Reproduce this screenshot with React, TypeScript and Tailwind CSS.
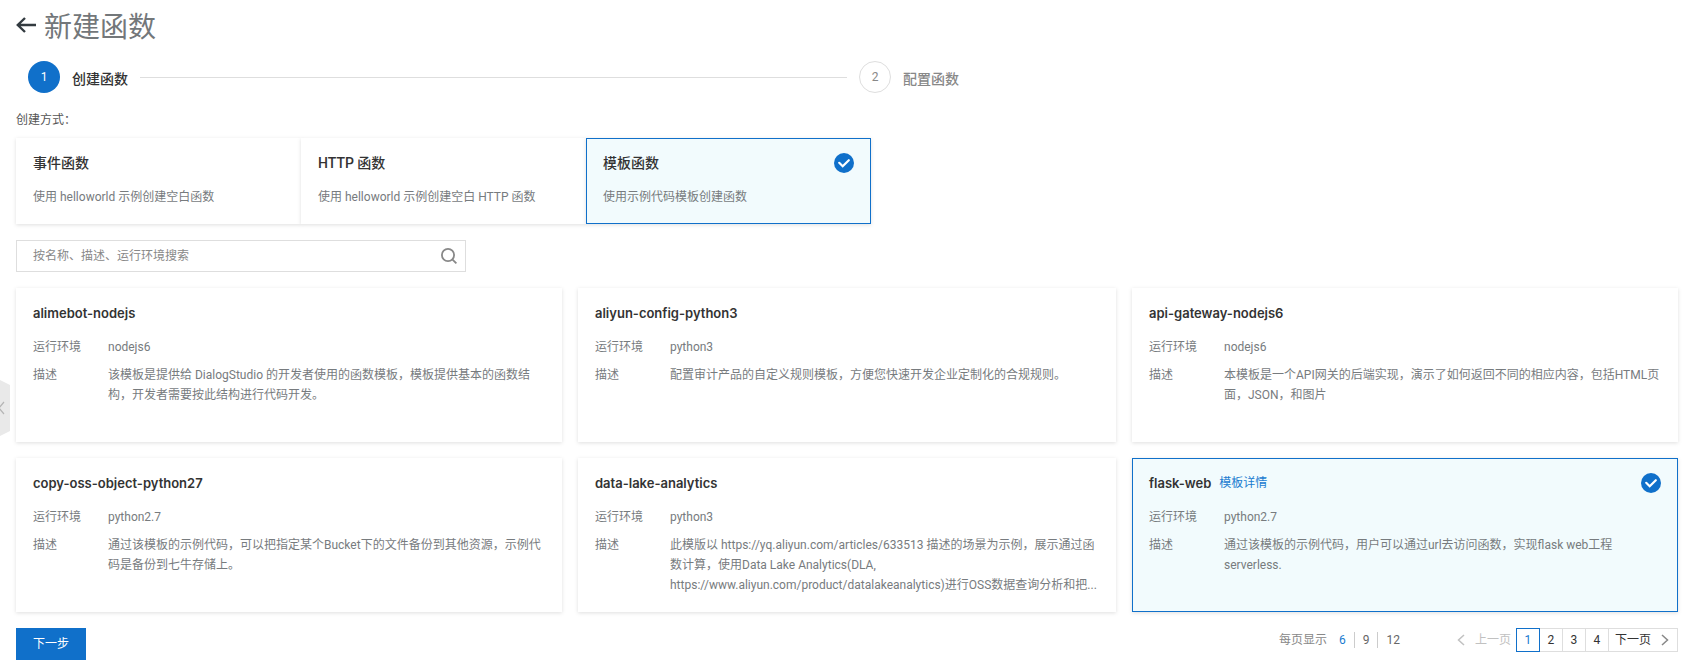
import { useState } from 'react';
import clsx from 'clsx';

interface CreateMethod {
  id: string;
  title: string;
  description: string;
}

interface Template {
  name: string;
  runtime: string;
  description: string;
}

const createMethods: CreateMethod[] = [
  { id: 'event', title: '事件函数', description: '使用 helloworld 示例创建空白函数' },
  { id: 'http', title: 'HTTP 函数', description: '使用 helloworld 示例创建空白 HTTP 函数' },
  { id: 'template', title: '模板函数', description: '使用示例代码模板创建函数' },
];

const templates: Template[] = [
  {
    name: 'alimebot-nodejs',
    runtime: 'nodejs6',
    description: '该模板是提供给 DialogStudio 的开发者使用的函数模板，模板提供基本的函数结构，开发者需要按此结构进行代码开发。',
  },
  {
    name: 'aliyun-config-python3',
    runtime: 'python3',
    description: '配置审计产品的自定义规则模板，方便您快速开发企业定制化的合规规则。',
  },
  {
    name: 'api-gateway-nodejs6',
    runtime: 'nodejs6',
    description: '本模板是一个API网关的后端实现，演示了如何返回不同的相应内容，包括HTML页面，JSON，和图片',
  },
  {
    name: 'copy-oss-object-python27',
    runtime: 'python2.7',
    description: '通过该模板的示例代码，可以把指定某个Bucket下的文件备份到其他资源，示例代码是备份到七牛存储上。',
  },
  {
    name: 'data-lake-analytics',
    runtime: 'python3',
    description:
      '此模版以 https://yq.aliyun.com/articles/633513 描述的场景为示例，展示通过函数计算，使用Data Lake Analytics(DLA, https://www.aliyun.com/product/datalakeanalytics)进行OSS数据查询分析和把...',
  },
  {
    name: 'flask-web',
    runtime: 'python2.7',
    description: '通过该模板的示例代码，用户可以通过url去访问函数，实现flask web工程serverless.',
  },
];

const pageSizes = [6, 9, 12];
const pages = [1, 2, 3, 4];

function CheckBadge() {
  return (
    <svg className="ml-auto size-5 shrink-0" viewBox="0 0 20 20" aria-hidden="true">
      <circle cx="10" cy="10" r="10" fill="#1070ca" />
      <path d="M5.2 9.8l3.5 3.5 6.1-6.1" fill="none" stroke="#fff" strokeWidth="2.2" strokeLinecap="round" />
    </svg>
  );
}

function Chevron({ direction }: { direction: 'left' | 'right' }) {
  return (
    <svg className="h-3 w-2 shrink-0" viewBox="0 0 8 12" fill="none" stroke="currentColor" strokeWidth="1.5" aria-hidden="true">
      <path d={direction === 'left' ? 'M7 1L1.5 6 7 11' : 'M1 1l5.5 5L1 11'} />
    </svg>
  );
}

function Steps() {
  return (
    <ol className="-mr-3 ml-3 flex h-8 items-center">
      <li className="flex w-1/2 items-center" aria-current="step">
        <span className="flex size-8 items-center justify-center rounded-full bg-[#1070ca] text-xs text-white">1</span>
        <span className="ml-3 pt-1 text-sm font-medium text-[#333]">创建函数</span>
        <span className="mx-3 h-px flex-1 bg-[#dedede]" />
      </li>
      <li className="flex items-center">
        <span className="flex size-8 items-center justify-center rounded-full border border-[#dedede] text-xs text-[#888]">2</span>
        <span className="ml-3 pt-1 text-sm font-medium text-[#888]">配置函数</span>
      </li>
    </ol>
  );
}

interface MethodCardProps {
  method: CreateMethod;
  selected: boolean;
  onSelect: () => void;
}

function MethodCard({ method, selected, onSelect }: MethodCardProps) {
  return (
    <label
      className={clsx(
        'relative block flex-1 cursor-pointer border px-4 pt-3.5 pb-4 shadow-[0_1px_4px_rgba(0,0,0,0.13)]',
        selected ? 'border-[#1070ca] bg-[#f2fbfd]' : 'border-transparent bg-white',
      )}
    >
      <input type="radio" name="method" className="sr-only" checked={selected} onChange={onSelect} />
      <span className="flex h-5 items-center text-sm font-medium text-[#333]">
        {method.title}
        {selected && <CheckBadge />}
      </span>
      <span className="mt-3.5 block text-xs leading-5 text-[#777b7e]">{method.description}</span>
    </label>
  );
}

interface TemplateCardProps {
  template: Template;
  selected: boolean;
  onSelect: () => void;
}

function TemplateCard({ template, selected, onSelect }: TemplateCardProps) {
  return (
    <label
      className={clsx(
        'relative block min-h-[154px] w-full cursor-pointer border px-4 pt-3.5 pb-4 text-xs leading-5 text-[#777b7e] shadow-[0_1px_4px_rgba(0,0,0,0.13)]',
        selected ? 'border-[#1070ca] bg-[#f2fbfd]' : 'border-transparent bg-white',
      )}
    >
      <input type="radio" name="template" className="sr-only" checked={selected} onChange={onSelect} />
      <span className="flex h-5 items-center">
        <span className="font-[Inter,'Noto_Sans_CJK_SC',sans-serif] text-[13px] font-semibold text-[#333]">{template.name}</span>
        {selected && (
          <>
            <a href="#detail" className="ml-2 text-[#1a7bd0]">
              模板详情
            </a>
            <CheckBadge />
          </>
        )}
      </span>
      <span className="mt-3.5 flex">
        <span className="w-[75px] shrink-0">运行环境</span>
        <span>{template.runtime}</span>
      </span>
      <span className="mt-2 flex">
        <span className="w-[75px] shrink-0">描述</span>
        <span className="min-w-0 flex-1">{template.description}</span>
      </span>
    </label>
  );
}

export default function App() {
  const [method, setMethod] = useState('template');
  const [template, setTemplate] = useState('flask-web');
  const [pageSize, setPageSize] = useState(6);
  const [page, setPage] = useState(1);

  return (
    <main className="relative overflow-x-hidden bg-white pt-[9px] pr-3.5 pb-3 pl-4 font-[Roboto,'Noto_Sans_CJK_SC',sans-serif] text-[#333]">
      {/* Sidebar collapse handle */}
      <button type="button" aria-label="收起" className="absolute top-[380px] left-0 text-[#b5b5b5]">
        <svg className="h-14 w-2.5" viewBox="0 0 10 56" fill="none" aria-hidden="true">
          <path d="M0 0l10 5v46L0 56z" fill="#e9e9e9" />
          <path d="M4 22l-5 6 5 6" stroke="currentColor" strokeWidth="1.2" />
        </svg>
      </button>

      {/* Header */}
      <header className="mb-4 flex h-9 items-center">
        <a href="#back" aria-label="返回" className="mr-2 mb-1 text-[#333b40]">
          <svg className="h-4 w-5" viewBox="0 0 20 16" fill="none" stroke="currentColor" strokeWidth="2.4" aria-hidden="true">
            <path d="M20 8H1.8M9 1L1.8 8 9 15" />
          </svg>
        </a>
        <h1 className="pt-0.5 text-[28px] leading-9 text-[#73777a]">新建函数</h1>
      </header>

      <Steps />

      {/* Creation method */}
      <fieldset className="mt-[17px]">
        <legend className="text-xs leading-5 text-[#555]">创建方式：</legend>
        <div className="mt-2 flex max-w-[855px]">
          {createMethods.map((item) => (
            <MethodCard key={item.id} method={item} selected={method === item.id} onSelect={() => setMethod(item.id)} />
          ))}
        </div>
      </fieldset>

      {/* Search */}
      <div className="mt-4 flex h-8 max-w-[450px] items-center border border-[#dedede] pr-2">
        <input
          type="text"
          aria-label="搜索模板"
          placeholder="按名称、描述、运行环境搜索"
          className="h-full min-w-0 flex-1 px-4 text-xs outline-none placeholder:text-[#888]"
        />
        <button type="button" aria-label="搜索" className="text-[#888]">
          <svg className="size-4" viewBox="0 0 16 16" fill="none" stroke="currentColor" strokeWidth="1.8" aria-hidden="true">
            <circle cx="7" cy="7" r="6.1" />
            <path d="M11.3 11.3l4.1 4.1" />
          </svg>
        </button>
      </div>

      {/* Templates */}
      <div className="mt-4 grid grid-cols-3 gap-y-4">
        {templates.map((item, index) => (
          <div key={item.name} className={clsx('flex', index % 3 !== 0 && 'pl-2', index % 3 !== 2 && 'pr-2')}>
            <TemplateCard template={item} selected={template === item.name} onSelect={() => setTemplate(item.name)} />
          </div>
        ))}
      </div>

      {/* Footer */}
      <footer className="mt-4 flex items-start justify-between text-xs">
        <button type="button" className="h-8 bg-[#1070ca] px-[17px] text-white">
          下一步
        </button>
        <div className="flex h-6 items-center">
          <span className="mr-3 text-[#888]">每页显示</span>
          <div className="flex items-center divide-x divide-[#ccc]">
            {pageSizes.map((size) => (
              <button
                key={size}
                type="button"
                onClick={() => setPageSize(size)}
                className={clsx('px-2 leading-4 first:pl-0 last:pr-0', pageSize === size ? 'text-[#1a7bd0]' : 'text-[#666]')}
              >
                {size}
              </button>
            ))}
          </div>
          <nav aria-label="分页" className="ml-[57px] flex h-6">
            <button type="button" disabled className="flex items-center gap-2.5 pr-[5px] text-[#c1c1c1]">
              <Chevron direction="left" />
              上一页
            </button>
            {pages.map((num) => (
              <button
                key={num}
                type="button"
                onClick={() => setPage(num)}
                className={clsx(
                  'border',
                  page === num ? 'w-6 border-[#1070ca] text-[#1a7bd0]' : 'w-[23px] border-l-0 border-[#dedede]',
                )}
              >
                {num}
              </button>
            ))}
            <button type="button" className="flex items-center gap-2.5 border border-l-0 border-[#dedede] pr-2 pl-1.5">
              下一页
              <span className="text-[#888]">
                <Chevron direction="right" />
              </span>
            </button>
          </nav>
        </div>
      </footer>
    </main>
  );
}
